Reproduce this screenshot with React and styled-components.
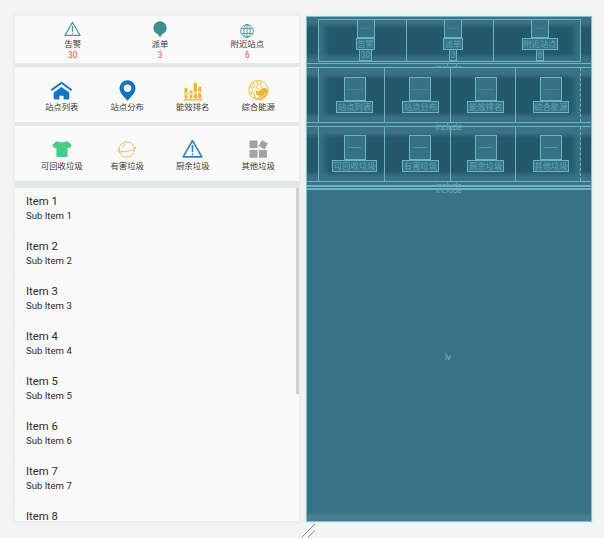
import React from "react";
import styled, { createGlobalStyle } from "styled-components";

const Global = createGlobalStyle`
  * { box-sizing: border-box; }
  body { margin: 0; background: #fff; font-family: Roboto, "Noto Sans CJK SC", sans-serif; overflow: hidden; }
`;
const Canvas = styled.main`
  position: relative;
  display: grid;
  grid-template-columns: 284px 286px;
  column-gap: 7px;
  width: 604px;
  height: 538px;
  padding: 16px 0 16px 15px;
  background: #f4f4f4;
`;
const Phone = styled.section`
  display: flex;
  flex-direction: column;
  height: 505px;
  background: #e5e8e8;
  box-shadow: 0 0 3px 2px #ececec;
`;
const Band = styled.div`
  display: grid;
  flex: none;
  grid-template-columns: repeat(${(p) => p.$cols}, 1fr);
  height: ${(p) => p.$height}px;
  margin-bottom: ${(p) => p.$gap}px;
  padding: ${(p) => p.$top}px 8px 0 14px;
  background: #fafafa;
`;
const Tile = styled.div`
  display: flex;
  flex-direction: column;
  align-items: center;
  min-width: 0;
`;
const IconSlot = styled.div`
  display: flex;
  align-items: center;
  justify-content: center;
  flex: none;
  width: 24px;
  height: ${(p) => p.$height}px;
  svg { display: block; overflow: visible; }
`;
const Label = styled.div`
  height: 12px;
  font-size: 8.4px;
  line-height: 12px;
  color: #383838;
  white-space: nowrap;
`;
const Count = styled.div`
  height: 11px;
  font-size: 8.4px;
  line-height: 11px;
  color: #e3524f;
`;
const List = styled.div`
  position: relative;
  flex: 1;
  min-height: 0;
  overflow: hidden;
  background: #fafafa;
`;
const Item = styled.div`
  height: 45px;
  padding: 6px 11px 0;
  border-bottom: 1px solid #f7f7f7;
  color: #2c2c2c;
`;
const Title = styled.div`
  font-size: 11.3px;
  line-height: 15px;
`;
const Sub = styled.div`
  font-size: 9.6px;
  line-height: 13px;
`;
const Scrollbar = styled.div`
  position: absolute;
  top: 0;
  right: 0;
  width: 3px;
  height: 206px;
  background: #d0d0d0;
`;

const LINE = "#6eb2c2";
const Blueprint = styled.section`
  display: flex;
  flex-direction: column;
  height: 506px;
  border: 1px solid #83bfce;
  background: #387285;
  box-shadow: 0 0 2px 1px #e4eef0;
`;
const PlanBand = styled.div`
  display: flex;
  flex: none;
  height: ${(p) => p.$height}px;
  padding: ${(p) => p.$pad};
  background: linear-gradient(#3d7386, #3a7184 6px, transparent 11px calc(100% - 10px), #3a7184 calc(100% - 4px)), #225a6c;
`;
const PlanGrid = styled.div`
  display: grid;
  flex: 1;
  grid-template-columns: repeat(${(p) => p.$cols}, 1fr);
  border: ${(p) => (p.$boxed ? `1px solid ${LINE}` : "0")};
  border-left: 1px solid ${LINE};
  border-right: 1px ${(p) => (p.$boxed ? "solid" : "dashed")} ${LINE};
  background: linear-gradient(90deg, #3b7386, #37708399 5px, transparent 10px calc(100% - 10px), #37708399 calc(100% - 5px), #3b7386);
`;
const PlanCell = styled.div`
  display: flex;
  flex-direction: column;
  align-items: center;
  min-width: 0;
  padding: ${(p) => p.$top}px 0 0 6px;
  & + & { border-left: 1px solid ${LINE}; }
`;
const PlanIcon = styled.div`
  display: flex;
  align-items: center;
  justify-content: center;
  flex: none;
  width: ${(p) => p.$width}px;
  height: ${(p) => p.$height}px;
  margin-top: ${(p) => p.$lift}px;
  border: 1px solid ${LINE};
  background: #367285;
`;
const Dash = styled.i`
  width: ${(p) => p.$width}px;
  height: 1px;
  background: #6aaaba;
  opacity: ${(p) => p.$opacity};
`;
const PlanText = styled.div`
  flex: none;
  height: 12px;
  padding: 0 0.5px;
  border: 1px solid ${LINE};
  margin-top: ${(p) => p.$lift}px;
  background: #367285;
  color: #60a5b6;
  font-size: 8.4px;
  line-height: 10px;
  white-space: nowrap;
`;
const PlanGap = styled.div`
  position: relative;
  z-index: 1;
  flex: none;
  height: ${(p) => p.$height}px;
  border: solid ${LINE};
  border-width: 1px 0;
  background: #367487;
`;
const Include = styled.span`
  position: absolute;
  top: ${(p) => p.$top}px;
  left: 0;
  width: 100%;
  height: ${(p) => p.$height}px;
  overflow: hidden;
  text-align: center;
  color: #6aacbc;
  font: 8.3px/${(p) => p.$line || 10}px "Liberation Sans", sans-serif;
`;
const PlanList = styled.div`
  display: flex;
  align-items: center;
  justify-content: center;
  flex: 1;
  padding: 2px 2px 0 0;
  border-top: 1px solid ${LINE};
  background: linear-gradient(#387285 calc(100% - 9px), #487f91 calc(100% - 5px));
  color: #78b8c7;
  font: 8.3px/10px "Liberation Sans", sans-serif;
`;
const Grip = styled.svg`
  position: absolute;
  left: 301px;
  top: 523px;
`;

const Warning = ({ size, color, w }) => (
  <svg width={size} height={size * 0.92} viewBox="0 0 24 22" fill="none" stroke={color} strokeWidth={w} strokeLinecap="round" strokeLinejoin="round">
    <path d="M12 1.8 22.7 20.4H1.3Z" />
    <path d="M12 7.5v7M12 17.4v.3" />
  </svg>
);
const Balloon = () => (
  <svg width="14" height="17" viewBox="0 -1 14 17" fill="#3b8f8e">
    <path d="M7 .3a6.7 6.7 0 0 1 6.7 6.6c0 3-1.9 5-4.5 6.2L7 16.5 4.8 13.1C2.2 11.9.3 9.9.3 6.9A6.7 6.7 0 0 1 7 .3Z" />
  </svg>
);
const Globe = () => (
  <svg width="14" height="14" viewBox="0 -2 14 14" fill="none" stroke="#3f9594" strokeWidth=".85">
    <circle cx="7" cy="7" r="6.4" />
    <ellipse cx="7" cy="7" rx="3.2" ry="6.4" />
    <path d="M7 .6v12.8M1.3 4.5h11.4M1.3 9.5h11.4" />
  </svg>
);
const House = () => (
  <svg width="21" height="19" viewBox="0 -1 21 19" fill="#1274c6">
    <path d="M.9 8.7 10.5 1.8 20.1 8.7" fill="none" stroke="#1274c6" strokeWidth="2" strokeLinecap="round" strokeLinejoin="round" />
    <path d="M10.5 5.9 18.3 11.5V17.3Q18.3 18.5 17.1 18.5H12.6V14.8H8.4V18.5H3.9Q2.7 18.5 2.7 17.3V11.5Z" />
  </svg>
);
const Pin = () => (
  <svg width="17" height="21" viewBox="0 -1 17 21">
    <path d="M8.5.2A8 8 0 0 1 16.5 8.1C16.5 13.2 11.5 17.5 8.5 20.8 5.5 17.5.5 13.2.5 8.1A8 8 0 0 1 8.5.2ZM8.5 4.5a3.7 3.7 0 1 0 0 7.4 3.7 3.7 0 0 0 0-7.4Z" fill="#1274c6" fillRule="evenodd" />
  </svg>
);
const Chart = () => (
  <svg width="20" height="19" viewBox="0 -2 20 19" fill="#efb52d">
    <path d="M1.5 6h3v10.5h-3zM6.5 8.5h2.8v8H6.5zM10.7 1h3.2v15.5h-3.2zM15.3 5h3v11.5h-3zM.8 17.3h18.7v1.2H.8z" />
    <path d="M1 13.6 6 10.6 10 13.2 14.5 9.2 19 11.5" fill="none" stroke="#fafafa" strokeWidth="1.7" />
    <path d="M1 13.6 6 10.6 10 13.2 14.5 9.2 19 11.5" fill="none" stroke="#efb52d" strokeWidth=".65" />
  </svg>
);
const Energy = () => (
  <svg width="21" height="21" viewBox="0 -.7 21 21" fill="none" stroke="#efb52d" strokeWidth=".95">
    <circle cx="10.5" cy="10.5" r="9.7" />
    <path d="M1.6 6.5 5 8.5 7 6.5 4.5 3M8 1.5 10 5 8 8 11 10M13 1.5 11.5 5 15 8.5M2 14 5 10.5" />
    <path d="M7.5 11.5 11 11.5 14 8.5 17 8 20 10.5C20 15 16 19.5 11.5 19.8L8 18.5 12 16.5 8 14.5Z" fill="#efb52d" stroke="none" />
    <path d="M2.5 15 5 13 8 17.5 5 18.5M9 13l3 1.5 4-2" />
    <path d="M10 18.5c3 0 6-2 8-5" stroke="#fafafa" strokeWidth=".7" />
  </svg>
);
const Shirt = () => (
  <svg width="20" height="17" viewBox="0 -.7 20 17" fill="#47cd85">
    <path d="M5.8.6C7.5 2 12.5 2 14.2.6L16.3 1 19.8 4.6 17.3 7.7 15.6 6.8V15.3Q15.6 16.4 14.5 16.4H5.5Q4.4 16.4 4.4 15.3V6.8L2.7 7.7.2 4.6 3.7 1Z" />
  </svg>
);
const Planet = () => (
  <svg width="20" height="18" viewBox="0 -.5 20 18" fill="none" stroke="#efbd62" strokeWidth="1">
    <circle cx="9.8" cy="9" r="7.7" />
    <path d="M2 8.3C.3 9.5.3 10.6 1.5 11c3 .9 13.500-.6 16.500-2.600 1.300-.9 1-2-.6-2M5.300 6.500Q6.300 4.500 8.200 3.800" strokeLinecap="round" />
  </svg>
);
const Blocks = () => (
  <svg width="19" height="18" viewBox="0 0 19 18" fill="#a3a3a3">
    <rect x=".5" y=".5" width="8" height="7.8" rx=".4" />
    <rect x=".5" y="10" width="8" height="7.8" rx=".4" />
    <rect x="9.9" y="10" width="8" height="7.8" rx=".4" />
    <rect x="10.7" y="1.3" width="7" height="7" rx=".4" transform="rotate(29 14.2 4.8)" />
  </svg>
);

const alerts = [
  { label: "告警", count: 30, icon: <Warning size={17} color="#4a9896" w={1.8} /> },
  { label: "派单", count: 3, icon: <Balloon /> },
  { label: "附近站点", count: 6, icon: <Globe /> },
];
const stations = [
  { label: "站点列表", icon: <House /> },
  { label: "站点分布", icon: <Pin /> },
  { label: "能效排名", icon: <Chart /> },
  { label: "综合能源", icon: <Energy /> },
];
const waste = [
  { label: "可回收垃圾", icon: <Shirt /> },
  { label: "有害垃圾", icon: <Planet /> },
  { label: "厨余垃圾", icon: <Warning size={21} color="#2e82c5" w={1.9} /> },
  { label: "其他垃圾", icon: <Blocks /> },
];

const Tiles = ({ items, slot }) =>
  items.map((t) => (
    <Tile key={t.label}>
      <IconSlot $height={slot}>{t.icon}</IconSlot>
      <Label>{t.label}</Label>
      {t.count !== undefined && <Count>{t.count}</Count>}
    </Tile>
  ));

const PlanTiles = ({ items, top, width, height, lift = 0, dash, opacity }) =>
  items.map((t) => (
    <PlanCell key={t.label} $top={top}>
      <PlanIcon $width={width} $height={height} $lift={lift}><Dash $width={dash} $opacity={opacity} /></PlanIcon>
      <PlanText $lift={0}>{t.label}</PlanText>
      {t.count !== undefined && <PlanText $lift={-1}>{t.count}</PlanText>}
    </PlanCell>
  ));

export default function App() {
  return (
    <>
      <Global />
      <Canvas>
        <Phone>
          <Band $cols={3} $height={47} $gap={4} $top={3}><Tiles items={alerts} slot={19} /></Band>
          <Band $cols={4} $height={55} $gap={4} $top={11}><Tiles items={stations} slot={23} /></Band>
          <Band $cols={4} $height={55} $gap={7} $top={11}><Tiles items={waste} slot={23} /></Band>
          <List>
            {[1, 2, 3, 4, 5, 6, 7, 8].map((n) => (
              <Item key={n}>
                <Title>Item {n}</Title>
                <Sub>Sub Item {n}</Sub>
              </Item>
            ))}
            <Scrollbar />
          </List>
        </Phone>
        <Blueprint>
          <PlanBand $height={46} $pad="2px 10px 1px 11px">
            <PlanGrid $cols={3} $boxed><PlanTiles items={alerts} top={0} width={18} height={19} lift={-1} dash={9} opacity={0.25} /></PlanGrid>
          </PlanBand>
          <PlanGap $height={5}><Include $top={0} $height={4} $line={8}>include</Include></PlanGap>
          <PlanBand $height={54} $pad="0 10px 0 11px">
            <PlanGrid $cols={4}><PlanTiles items={stations} top={9} width={22} height={24} dash={16} opacity={0.3} /></PlanGrid>
          </PlanBand>
          <PlanGap $height={5}><Include $top={-1} $height={10}>include</Include></PlanGap>
          <PlanBand $height={54} $pad="0 10px 0 11px">
            <PlanGrid $cols={4}><PlanTiles items={waste} top={8} width={22} height={25} dash={13} opacity={0.6} /></PlanGrid>
          </PlanBand>
          <PlanGap $height={5}>
            <Include $top={0} $height={4} $line={8}>include</Include>
            <Include $top={3} $height={10}>include</Include>
          </PlanGap>
          <PlanGap $height={3} />
          <PlanList>lv</PlanList>
        </Blueprint>
        <Grip width="15" height="15" viewBox="0 0 15 15" stroke="#8b8b8b" strokeWidth="1">
          <path d="M1 14 14 1M7 14 14 7.5" />
        </Grip>
      </Canvas>
    </>
  );
}
